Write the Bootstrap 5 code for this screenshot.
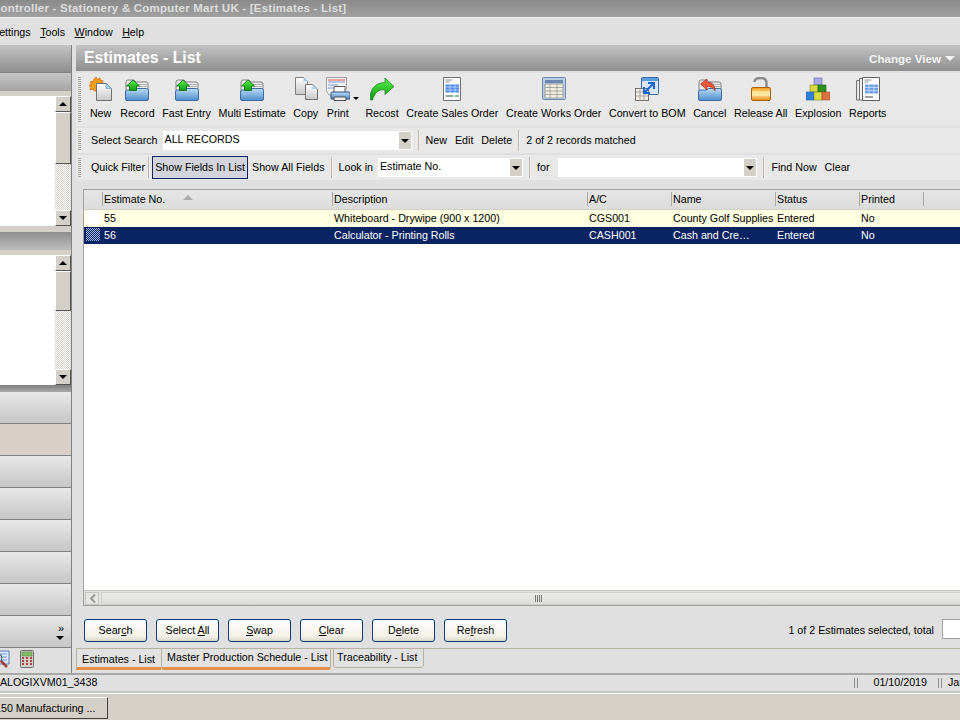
<!DOCTYPE html>
<html lang="en">
<head>
<meta charset="UTF-8">
<title>Estimates - List</title>
<link href="https://cdn.jsdelivr.net/npm/bootstrap@5.3.2/dist/css/bootstrap.min.css" rel="stylesheet">
<style>
  html, body { height: 720px; overflow: hidden; }
  body { width: 960px; font-family: "Liberation Sans", Arial, sans-serif; font-size: 10.7px; line-height: 13px; color: #000; background: #e0e0e0; }
  .svg-defs { display: block; width: 0; height: 0; }

  .title-bar { height: 17px; line-height: 17px; background: linear-gradient(#8a8a8a, #a0a0a0); color: #ddd; font-weight: 700; font-size: 11.5px; white-space: nowrap; overflow: hidden; }
  .title-bar span { margin-left: -8px; letter-spacing: .22px; }
  .menu-bar { height: 28px; padding-top: 1px; background: #e0e0e0; border-top: 1px solid #f0f0f0; gap: 9.5px; line-height: 26px; overflow: hidden; white-space: nowrap; }
  .menu-bar span:first-child { margin-left: -8px; }
  .main { height: 628px; }

  .left { width: 72px; flex: none; border-right: 1px solid #808080; overflow: hidden; }
  .band-head { height: 27px; background: linear-gradient(#c4c4c4, #8e8e8e); flex: none; }
  .band { height: 19px; background: linear-gradient(#c6c6c6, #a4a4a4); flex: none; border-top: 1px solid #808080; }
  .band2 { height: 18px; background: linear-gradient(#8e8e8e, #bcbcbc); flex: none; }
  .beige { height: 5px; background: #d4d0c8; flex: none; }
  .beige-sm { height: 6px; background: #d4d0c8; flex: none; }
  .pick { height: 130px; flex: none; background: #fff; }
  .pick-text { flex: 1; font-size: 12px; padding-top: 97px; margin-left: -3px; line-height: 13px; }
  .sb { width: 16px; flex: none; }
  .sb-btn, .sb-thumb { background: #d4d0c8; border: 1px solid; border-color: #fff #555 #555 #fff; flex: none; }
  .sb-btn { height: 16px; }
  .sb-track { flex: 1; background: repeating-conic-gradient(#d4d0c8 0 25%, #fff 0 50%) 0 0 / 2px 2px; }
  .thumb-a { height: 52px; }
  .thumb-b { height: 40px; }
  .tri-up, .tri-down { width: 0; height: 0; border-left: 4px solid transparent; border-right: 4px solid transparent; }
  .tri-up { border-bottom: 4px solid #000; }
  .tri-down { border-top: 4px solid #000; }
  .strip { height: 7px; background: linear-gradient(#7e7e7e, #a8a8a8); flex: none; }
  .nav-row { height: 32px; flex: none; background: linear-gradient(#e8e8e8, #c6c6c6); border-bottom: 1px solid #808080; }
  .nav-row.active { background: #d8cfc8; }
  .nav-more { padding-right: 7px; padding-top: 8px; font-size: 11px; line-height: 8px; }
  .tray { height: 25px; flex: none; gap: 9px; padding: 2px 0 0 0; }
  .tray svg:first-child { margin-left: -9px; }

  .right { width: 884px; flex: none; margin-left: 4px; overflow: hidden; }
  .head { height: 26px; flex: none; background: linear-gradient(#c4c4c4, #8e8e8e); color: #fff; padding: 0 5px 0 8px; }
  .head h1 { font-size: 15.8px; line-height: 26px; font-weight: 700; margin: 0; color: #fff; }
  .head .view { font-size: 11.6px; font-weight: 700; color: #f2f2f2; }
  .tri-view { border-left: 5px solid transparent; border-right: 5px solid transparent; border-top: 5px solid #f2f2f2; width: 0; height: 0; }
  .bar { background: #e8e8e8; flex: none; margin-top: 2px; padding-left: 2px; white-space: nowrap; }
  .grip { width: 3px; flex: none; align-self: stretch; margin: 3px 0; background: repeating-linear-gradient(#a8a498 0 1px, transparent 1px 2px); }
  .bar-tools { height: 53px; gap: 7.6px; }
  .bar-tools .grip { margin: 4px 0; }
  .tool { display: flex; flex-direction: column; align-items: center; height: 49px; padding-top: 4px; position: relative; }
  .tool svg { width: 24px; height: 24px; display: block; margin-bottom: 6px; flex: none; }
  .print-caret { width: 0; height: 0; border-left: 3px solid transparent; border-right: 3px solid transparent; border-top: 3px solid #000; position: absolute; right: -9px; top: 24px; }
  .bar-search { height: 25px; margin-top: 2px; }
  .row-label { margin: 0 5px 0 10px; }
  .sep { width: 2px; flex: none; align-self: stretch; margin: 2px 6px; background: #c0b8ac; border-right: 1px solid #eee; }
  .sep.tight { margin: 2px 2px 2px 3px; }
  .combo { height: 19px; background: #fff; line-height: 17px; padding-left: 2px; flex: none; }
  .combo .sb-drop { width: 12px; margin: 1px 1px 1px 0; background: #d4d0c8; flex: none; }
  .combo .txt { flex: 1; }
  .combo-search { width: 249px; }
  .combo-look { width: 145px; margin-left: 5px; }
  .combo-for { width: 199px; margin-left: 9px; }
  .show-fields { border: 1px solid #0a2463; background: #d4d5dc; width: 96px; height: 23px; line-height: 21px; text-align: center; flex: none; }

  .list { height: 417px; flex: none; margin: 9px 0 0 7px; border: 1px solid #a0a0a0; border-right: 0; background: #fff; overflow: hidden; }
  .est-table { table-layout: fixed; width: 960px; margin: 0; font-size: 10.7px; line-height: 13px; }
  .est-table th, .est-table td { padding: 2px 3px 2px 2px; height: 17px; border: 0; font-weight: 400; color: #000; background: #fff; box-shadow: none; white-space: nowrap; overflow: hidden; }
  .est-table th { height: 19px; padding: 1px 3px 3px; background: linear-gradient(#a8a8a8, #a8a8a8) 0 2px / 1px 14px no-repeat, linear-gradient(#e6e6e6, #dcdcdc); border-bottom: 1px solid #d0d0c8; padding-left: 2px; }
  .est-table th:first-child { background: linear-gradient(#e6e6e6, #dcdcdc); }
  .est-table .odd td { background: #ffffe2; }
  .est-table .sel td { background: #0a2463; color: #fff; height: 17px; }
  .est-table .mark-cell { padding: 1px 2px; }
  .mark { display: block; width: 14px; height: 13px; background: #fff; }
  .mark.dith { background: repeating-conic-gradient(#0a2463 0 25%, #a8b8e0 0 50%) 0 0 / 2px 2px; }
  .sort-up { display: inline-block; border-left: 5px solid transparent; border-right: 5px solid transparent; border-bottom: 5px solid #aaa; width: 0; height: 0; margin-left: 18px; vertical-align: 3px; }
  .hscroll { height: 15px; flex: none; margin-top: auto; border-top: 1px solid #c8c8c0; background: #e2e2e2; padding: 1px 0 0 1px; gap: 2px; }
  .hs-btn { width: 14px; height: 13px; border: 1px solid #c4c4bc; background: #e6e6e6; color: #999; flex: none; }
  .hs-thumb { flex: 1; height: 13px; border: 1px solid #d0d0c8; border-right: 0; background: linear-gradient(#ececec, #dcdcdc); }
  .grip-v { width: 8px; height: 7px; background: repeating-linear-gradient(90deg, #777 0 1px, transparent 1px 2px); margin-left: 16px; }

  .actions { height: 24px; margin: 13px -22px 0 8px; flex: none; gap: 9px; }
  .actions .btn { width: 63px; height: 23px; padding: 0; font-size: 10.7px; line-height: 21px; color: #000; border: 1px solid #003c74; border-radius: 3px; background: linear-gradient(#fff, #f4f2ea 75%, #dcd8cc); }
  .total-text { padding-top: 5px; }
  .total-box { width: 40px; height: 20px; background: #fff; border: 1px solid #a0a0a0; margin-left: 8px; flex: none; }
  .tabs { height: 21px; flex: none; margin-top: 5px; border-top: 1px solid #b4b49c; white-space: nowrap; }
  .tab { flex: none; height: 20px; line-height: 16px; padding: 0 5px; background: #e2e2e2; margin-top: -1px; }
  .tab.on { width: 85px; height: 21px; padding: 3px 0 0 5px; line-height: 14px; border-left: 1px solid #b4b49c; border-bottom: 3px solid #e39048; margin-top: 0; }
  .tab.alt { width: 170px; height: 22px; border: 1px solid #b4b49c; border-bottom: 3px solid #e39048; border-radius: 0 0 3px 3px; }
  .tab.plain { width: 91px; margin-left: 2px; padding-left: 3px; border: 1px solid #b4b49c; border-radius: 0 0 3px 3px; }

  .status { height: 20px; flex: none; margin-right: -26px; border-top: 2px solid #a8a8a8; border-bottom: 2px solid #c4c4c4; background: #e0e0e0; line-height: 15px; white-space: nowrap; }
  .status .host { margin-left: -9px; }
  .pipes { width: 4px; height: 10px; flex: none; align-self: center; margin: 0 15px 0 0; border-left: 1px solid #909090; border-right: 1px solid #909090; }
  .pipes.end { margin: 0 6px 0 11px; }
  .task { height: 27px; flex: none; border-top: 1px solid #fff; background: #d4d0c8; padding-top: 3px; }
  .task-btn { width: 109px; height: 22px; border: 1px solid; border-color: #fff #404040 #404040 #fff; margin-left: -1px; line-height: 20px; white-space: nowrap; overflow: hidden; }
  .task-btn span { margin-left: -5px; display: inline-block; }
</style>
</head>
<body class="d-flex flex-column">

<svg class="svg-defs" xmlns="http://www.w3.org/2000/svg">
  <defs>
    <linearGradient id="gFold" x1="0" y1="0" x2="0" y2="1"><stop offset="0" stop-color="#bcdcf4"/><stop offset="1" stop-color="#4c8ccc"/></linearGradient>
    <linearGradient id="gGreen" x1="0" y1="0" x2="0" y2="1"><stop offset="0" stop-color="#5cf04c"/><stop offset="1" stop-color="#0c9a10"/></linearGradient>
    <linearGradient id="gDoc" x1="0" y1="0" x2="0" y2="1"><stop offset="0" stop-color="#fff"/><stop offset="1" stop-color="#c8c8c8"/></linearGradient>
    <linearGradient id="gGold" x1="0" y1="0" x2="0" y2="1"><stop offset="0" stop-color="#f09a18"/><stop offset=".5" stop-color="#ffe9a0"/><stop offset="1" stop-color="#e88a10"/></linearGradient>
    <symbol id="i-new" viewBox="0 0 24 24">
      <path d="M7 0l1.500 2.200L11 1l.5 2.600H14L12 14H6L3.600 12.500 1 12.800l.8-2.500L0 8.500l2-1.500L1.500 4.400l2.600.2L4.800 2z" fill="#f5a01c" stroke="#d8620c" stroke-width=".7"/>
      <path d="M7.500 6.500h9.500l5.500 5V23.500H7.500z" fill="url(#gDoc)" stroke="#707070"/>
      <path d="M17 6.500v5h5.500z" fill="#a8d0f0" stroke="#6c9cc4" stroke-width=".6"/>
    </symbol>
    <symbol id="i-folder" viewBox="0 0 24 24">
      <path d="M1 5q0-2 2-2h6l2 2h10q2 0 2 2v8H1z" fill="#ececec" stroke="#808080"/>
      <path d="M11 7.500h11M11 9.500h11M11 11.500h11" stroke="#b4b4b4"/>
      <path d="M.5 15q0-2 2-2h6l2-1.500h11q2 0 2 2V22q0 1.500-1.500 1.500H2q-1.500 0-1.500-1.500z" fill="url(#gFold)" stroke="#3c6ca8"/>
    </symbol>
    <symbol id="i-record" viewBox="0 0 24 24">
      <use href="#i-folder"/>
      <path d="M8 3l6.500 6H11.500v4.500h-7V9H1.500z" fill="url(#gGreen)" stroke="#0a6a14" stroke-width=".8"/>
    </symbol>
    <symbol id="i-copy" viewBox="0 0 24 24">
      <path d="M1.500 .5h8l4 4V17.500H1.500z" fill="url(#gDoc)" stroke="#808080"/>
      <path d="M9.500 .5v4h4z" fill="#a8d0f0"/>
      <path d="M11.500 7.500h7l5 4.500V22.500H11.500z" fill="url(#gDoc)" stroke="#707070"/>
      <path d="M18.500 7.500v4.500h5z" fill="#a8d0f0"/>
    </symbol>
    <symbol id="i-print" viewBox="0 0 24 24">
      <path d="M.5 .5h20V12L7 18H3L.5 14z" fill="#f2f2f2" stroke="#a0a0a0"/>
      <path d="M2 3h17" stroke="#e05050"/><path d="M2 5h17M2 8h10M2 11h6" stroke="#7c9cd8"/>
      <path d="M8 9.500h11v6H8z" fill="#fafafa" stroke="#606060"/>
      <path d="M6 15h17q1 0 1 1.500V22H5v-5.500Q5 15 6 15z" fill="url(#gFold)" stroke="#2c4c80"/>
      <path d="M8 20h12v3.500H8z" fill="#eee" stroke="#505050"/>
    </symbol>
    <symbol id="i-recost" viewBox="0 0 24 24">
      <path d="M15 1l9 8.500-9 8V13C9 12 5 15 2.500 23H.5C-.5 13 4 6 15 5.500z" fill="url(#gGreen)" stroke="#0c7a18" stroke-width=".7"/>
    </symbol>
    <symbol id="i-sales" viewBox="0 0 24 24">
      <path d="M3.500 .5h17V23.500H3.500z" fill="#fff" stroke="#707070"/>
      <path d="M5.500 3h7M5.500 5h4" stroke="#8c8c8c"/>
      <path d="M5.500 7.500h13.500v8H5.500z" fill="#4c8ce8"/>
      <path d="M5.500 10h13.500M5.500 13h13.500M10 7.500v8M15 7.500v8" stroke="#d4e4fc" stroke-width=".7"/>
      <path d="M5.500 19h8M15 19h4" stroke="#8cb494" stroke-width="2"/>
    </symbol>
    <symbol id="i-works" viewBox="0 0 24 24">
      <rect x=".5" y=".5" width="23" height="22" rx="1" fill="#b8cce4" stroke="#6c88b0"/>
      <path d="M3 3h18v3H3z" fill="#6c88b0"/>
      <path d="M3 7h18v14H3z" fill="#f0ece0" stroke="#808080" stroke-width=".6"/>
      <path d="M3 10.500h18M3 14h18M3 17.500h18M8 7v14M15 7v14" stroke="#909090" stroke-width=".7"/>
    </symbol>
    <symbol id="i-bom" viewBox="0 0 24 24">
      <rect x="6.500" y=".5" width="17" height="17" rx="1" fill="#d8e8f8" stroke="#3c6ca8"/>
      <path d="M7 1h16v3H7z" fill="#5c9ce0"/>
      <rect x=".5" y="11.500" width="13" height="12" fill="#f0ece0" stroke="#707070"/>
      <path d="M.5 15h13M.5 19h13M5 11.500v12M9 11.500v12" stroke="#909090" stroke-width=".7"/>
      <path d="M10 15l8-8M13 6h6v6M15 16H9v-6" fill="none" stroke="#1c64d0" stroke-width="2"/>
    </symbol>
    <symbol id="i-cancel" viewBox="0 0 24 24">
      <use href="#i-folder"/>
      <path d="M2.500 7L9 2v3c5 0 8 3 8 9-2-3.500-4-4.500-8-4.500V13z" fill="#e85838" stroke="#a82c1c" stroke-width=".7"/>
    </symbol>
    <symbol id="i-lock" viewBox="0 0 24 24">
      <path d="M5.500 5q0-4 6-4t6 5v5" fill="none" stroke="#888" stroke-width="2.400"/>
      <rect x="2.500" y="10.500" width="19" height="13" rx="1.500" fill="url(#gGold)" stroke="#a86008"/>
      <path d="M3 15h18M3 18h18" stroke="#fff2c0"/>
    </symbol>
    <symbol id="i-explode" viewBox="0 0 24 24">
      <rect x="8" y="1" width="8" height="7" fill="#a8a8e8" stroke="#6060a8" stroke-width=".6"/>
      <rect x="4" y="8" width="8" height="7" fill="#d8d840" stroke="#808020" stroke-width=".6"/>
      <rect x="12" y="8" width="8" height="7" fill="#2c9020" stroke="#186010" stroke-width=".6"/>
      <rect x="0" y="15" width="8" height="8" fill="#2c80e0" stroke="#1c5ca0" stroke-width=".6"/>
      <rect x="8" y="15" width="8" height="8" fill="#dcdc40" stroke="#808020" stroke-width=".6"/>
      <rect x="16" y="15" width="8" height="8" fill="#dc7040" stroke="#a05028" stroke-width=".6"/>
    </symbol>
    <symbol id="i-reports" viewBox="0 0 24 24">
      <path d="M.5 3.500h3V23H.5z" fill="#e8e8e8" stroke="#707070"/>
      <path d="M3.500 1.500h3V23h-3z" fill="#f2f2f2" stroke="#707070"/>
      <path d="M6.500 .5H23.500V23.500H6.500z" fill="#fff" stroke="#606060"/>
      <path d="M8.500 3h7M8.500 5h4" stroke="#8c8c8c"/>
      <path d="M9 7.500h13v9H9z" fill="#6ca0e8"/>
      <path d="M9 10.500h13M9 13.500h13M13 7.500v9M18 7.500v9" stroke="#dce8fc" stroke-width=".7"/>
      <path d="M9 20h8" stroke="#a0a0a0" stroke-width="2"/>
    </symbol>
  </defs>
</svg>

<div class="title-bar"><span>Controller - Stationery &amp; Computer Mart UK - [Estimates - List]</span></div>
<div class="menu-bar d-flex">
  <span><u>S</u>ettings</span><span><u>T</u>ools</span><span><u>W</u>indow</span><span><u>H</u>elp</span>
</div>

<div class="main d-flex">
  <div class="left d-flex flex-column">
    <div class="band-head"></div>
    <div class="band"></div>
    <div class="beige"></div>
    <div class="pick d-flex">
      <div class="pick-text">l</div>
      <div class="sb d-flex flex-column">
        <div class="sb-btn d-flex align-items-center justify-content-center"><i class="tri-up"></i></div>
        <div class="sb-thumb thumb-a"></div>
        <div class="sb-track"></div>
        <div class="sb-btn d-flex align-items-center justify-content-center"><i class="tri-down"></i></div>
      </div>
    </div>
    <div class="beige-sm"></div>
    <div class="band2"></div>
    <div class="beige"></div>
    <div class="pick d-flex">
      <div class="flex-grow-1"></div>
      <div class="sb d-flex flex-column">
        <div class="sb-btn d-flex align-items-center justify-content-center"><i class="tri-up"></i></div>
        <div class="sb-thumb thumb-b"></div>
        <div class="sb-track"></div>
        <div class="sb-btn d-flex align-items-center justify-content-center"><i class="tri-down"></i></div>
      </div>
    </div>
    <div class="strip"></div>
    <div class="nav-row"></div>
    <div class="nav-row active"></div>
    <div class="nav-row"></div>
    <div class="nav-row"></div>
    <div class="nav-row"></div>
    <div class="nav-row"></div>
    <div class="nav-row"></div>
    <div class="nav-row nav-more d-flex flex-column align-items-end"><span>&raquo;</span><i class="tri-down mt-1"></i></div>
    <div class="tray d-flex">
      <svg width="20" height="20" viewBox="0 0 20 20"><path d="M6 1h12v13H6z" fill="#dce8f8" stroke="#5c7cb0"/><path d="M8 4h8M8 7h8M8 10h8" stroke="#6c9ce0"/><circle cx="7" cy="8" r="4" fill="#bcd8f4" stroke="#555"/><path d="M10 11l6 6" stroke="#a04040" stroke-width="2.500"/></svg>
      <svg width="14" height="18" viewBox="0 0 14 18"><rect x=".5" y=".5" width="13" height="17" rx="1" fill="#d0d0c8" stroke="#707070"/><rect x="2" y="2" width="10" height="4" fill="#80c060" stroke="#507040" stroke-width=".5"/><path d="M2 8h2M6 8h2M10 8h2M2 11h2M6 11h2M10 11h2M2 14h2M6 14h2M10 14h2" stroke="#b04040" stroke-width="2"/></svg>
    </div>
  </div>

  <div class="right d-flex flex-column">
    <div class="head d-flex align-items-center justify-content-between">
      <h1>Estimates - List</h1>
      <div class="d-flex align-items-center gap-1"><span class="view">Change View</span><i class="tri-view"></i></div>
    </div>

    <div class="bar bar-tools d-flex">
      <div class="grip me-n1"></div>
      <div class="tool"><svg><use href="#i-new"/></svg>New</div>
      <div class="tool"><svg><use href="#i-record"/></svg>Record</div>
      <div class="tool"><svg><use href="#i-record"/></svg>Fast Entry</div>
      <div class="tool"><svg><use href="#i-record"/></svg>Multi Estimate</div>
      <div class="tool"><svg><use href="#i-copy"/></svg>Copy</div>
      <div class="tool me-2"><svg><use href="#i-print"/></svg>Print<i class="print-caret"></i></div>
      <div class="tool"><svg><use href="#i-recost"/></svg>Recost</div>
      <div class="tool"><svg><use href="#i-sales"/></svg>Create Sales Order</div>
      <div class="tool"><svg><use href="#i-works"/></svg>Create Works Order</div>
      <div class="tool"><svg><use href="#i-bom"/></svg>Convert to BOM</div>
      <div class="tool"><svg><use href="#i-cancel"/></svg>Cancel</div>
      <div class="tool"><svg><use href="#i-lock"/></svg>Release All</div>
      <div class="tool"><svg><use href="#i-explode"/></svg>Explosion</div>
      <div class="tool"><svg><use href="#i-reports"/></svg>Reports</div>
    </div>

    <div class="bar bar-search d-flex align-items-center">
      <div class="grip"></div>
      <span class="row-label">Select Search</span>
      <div class="combo combo-search d-flex"><span class="txt">ALL RECORDS</span><span class="sb-drop d-flex align-items-center justify-content-center"><i class="tri-down"></i></span></div>
      <div class="sep"></div>
      <span class="me-2">New</span><span class="me-2">Edit</span><span>Delete</span>
      <div class="sep"></div>
      <span>2 of 2 records matched</span>
    </div>

    <div class="bar bar-search d-flex align-items-center">
      <div class="grip"></div>
      <span class="row-label me-0">Quick Filter</span>
      <div class="sep tight"></div>
      <div class="show-fields">Show Fields In List</div>
      <span class="ms-1">Show All Fields</span>
      <div class="sep"></div>
      <span>Look in</span>
      <div class="combo combo-look d-flex"><span class="txt">Estimate No.</span><span class="sb-drop d-flex align-items-center justify-content-center"><i class="tri-down"></i></span></div>
      <div class="sep"></div>
      <span>for</span>
      <div class="combo combo-for d-flex"><span class="txt"></span><span class="sb-drop d-flex align-items-center justify-content-center"><i class="tri-down"></i></span></div>
      <div class="sep"></div>
      <span class="me-2">Find Now</span><span>Clear</span>
    </div>

    <div class="list d-flex flex-column">
      <table class="table est-table">
        <colgroup><col style="width:18px"><col style="width:230px"><col style="width:255px"><col style="width:84px"><col style="width:104px"><col style="width:84px"><col style="width:64px"><col></colgroup>
        <thead>
          <tr><th></th><th>Estimate No.<i class="sort-up"></i></th><th>Description</th><th>A/C</th><th>Name</th><th>Status</th><th>Printed</th><th></th></tr>
        </thead>
        <tbody>
          <tr class="odd"><td class="mark-cell"><span class="mark"></span></td><td>55</td><td>Whiteboard - Drywipe (900 x 1200)</td><td>CGS001</td><td>County Golf Supplies</td><td>Entered</td><td>No</td><td></td></tr>
          <tr class="sel"><td class="mark-cell"><span class="mark dith"></span></td><td>56</td><td>Calculator - Printing Rolls</td><td>CASH001</td><td>Cash and Cre&hellip;</td><td>Entered</td><td>No</td><td></td></tr>
        </tbody>
      </table>
      <div class="hscroll d-flex">
        <div class="hs-btn d-flex align-items-center justify-content-center"><svg width="7" height="9" viewBox="0 0 7 9"><path d="M6 .5L2 4.500l4 4" fill="none" stroke="#999" stroke-width="2"/></svg></div>
        <div class="hs-thumb d-flex align-items-center justify-content-center"><i class="grip-v"></i></div>
      </div>
    </div>

    <div class="actions d-flex align-items-start">
      <button class="btn">Sear<u>c</u>h</button>
      <button class="btn">Select <u>A</u>ll</button>
      <button class="btn"><u>S</u>wap</button>
      <button class="btn"><u>C</u>lear</button>
      <button class="btn">D<u>e</u>lete</button>
      <button class="btn">Re<u>f</u>resh</button>
      <div class="ms-auto d-flex"><span class="total-text">1 of 2 Estimates selected, total</span><div class="total-box"></div></div>
    </div>

    <div class="tabs d-flex">
      <div class="tab on">Estimates - List</div>
      <div class="tab alt">Master Production Schedule - List</div>
      <div class="tab plain">Traceability - List</div>
    </div>
  </div>
</div>

<div class="status d-flex">
  <span class="host">MALOGIXVM01_3438</span>
  <span class="ms-auto pipes"></span><span>01/10/2019</span><span class="pipes end"></span><span>January</span>
</div>
<div class="task"><div class="task-btn"><span>150 Manufacturing ...</span></div></div>

<script src="https://cdn.jsdelivr.net/npm/bootstrap@5.3.2/dist/js/bootstrap.bundle.min.js"></script>
</body>
</html>
